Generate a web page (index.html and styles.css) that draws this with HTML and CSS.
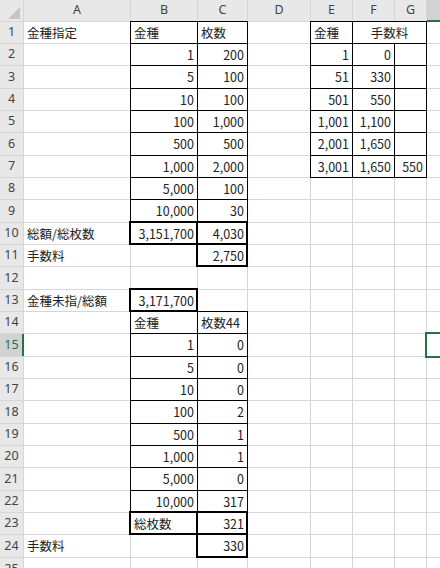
FILE: index.html
```html
<!DOCTYPE html>
<html lang="ja">
<head>
<meta charset="utf-8">
<title>Sheet</title>
<link rel="stylesheet" href="styles.css">
</head>
<body>
<div class="sheet">
  <div class="corner"></div><div class="hd">A</div><div class="hd">B</div><div class="hd">C</div><div class="hd">D</div><div class="hd">E</div><div class="hd">F</div><div class="hd">G</div><div class="hd hd-sel"></div>

  <div class="rh">1</div><div class="c">金種指定</div><div class="c b">金種</div><div class="c b">枚数</div><div class="c"></div><div class="c b">金種</div><div class="c b ctr span2">手数料</div><div class="c"></div>

  <div class="rh">2</div><div class="c"></div><div class="c b n">1</div><div class="c b n">200</div><div class="c"></div><div class="c b n">1</div><div class="c b n">0</div><div class="c b"></div><div class="c"></div>

  <div class="rh">3</div><div class="c"></div><div class="c b n">5</div><div class="c b n">100</div><div class="c"></div><div class="c b n">51</div><div class="c b n">330</div><div class="c b"></div><div class="c"></div>

  <div class="rh">4</div><div class="c"></div><div class="c b n">10</div><div class="c b n">100</div><div class="c"></div><div class="c b n">501</div><div class="c b n">550</div><div class="c b"></div><div class="c"></div>

  <div class="rh">5</div><div class="c"></div><div class="c b n">100</div><div class="c b n">1,000</div><div class="c"></div><div class="c b n">1,001</div><div class="c b n">1,100</div><div class="c b"></div><div class="c"></div>

  <div class="rh">6</div><div class="c"></div><div class="c b n">500</div><div class="c b n">500</div><div class="c"></div><div class="c b n">2,001</div><div class="c b n">1,650</div><div class="c b"></div><div class="c"></div>

  <div class="rh">7</div><div class="c"></div><div class="c b n">1,000</div><div class="c b n">2,000</div><div class="c"></div><div class="c b n">3,001</div><div class="c b n">1,650</div><div class="c b n">550</div><div class="c"></div>

  <div class="rh">8</div><div class="c"></div><div class="c b n">5,000</div><div class="c b n">100</div><div class="c"></div><div class="c"></div><div class="c"></div><div class="c"></div><div class="c"></div>

  <div class="rh">9</div><div class="c"></div><div class="c b n">10,000</div><div class="c b n">30</div><div class="c"></div><div class="c"></div><div class="c"></div><div class="c"></div><div class="c"></div>

  <div class="rh">10</div><div class="c">総額/総枚数</div><div class="c k n">3,151,700</div><div class="c k n">4,030</div><div class="c"></div><div class="c"></div><div class="c"></div><div class="c"></div><div class="c"></div>

  <div class="rh">11</div><div class="c">手数料</div><div class="c"></div><div class="c k n">2,750</div><div class="c"></div><div class="c"></div><div class="c"></div><div class="c"></div><div class="c"></div>

  <div class="rh">12</div><div class="c"></div><div class="c"></div><div class="c"></div><div class="c"></div><div class="c"></div><div class="c"></div><div class="c"></div><div class="c"></div>

  <div class="rh">13</div><div class="c">金種未指/総額</div><div class="c k n">3,171,700</div><div class="c"></div><div class="c"></div><div class="c"></div><div class="c"></div><div class="c"></div><div class="c"></div>

  <div class="rh">14</div><div class="c"></div><div class="c b">金種</div><div class="c b">枚数44</div><div class="c"></div><div class="c"></div><div class="c"></div><div class="c"></div><div class="c"></div>

  <div class="rh rh-sel">15</div><div class="c"></div><div class="c b n">1</div><div class="c b n">0</div><div class="c"></div><div class="c"></div><div class="c"></div><div class="c"></div><div class="c sel"></div>

  <div class="rh">16</div><div class="c"></div><div class="c b n">5</div><div class="c b n">0</div><div class="c"></div><div class="c"></div><div class="c"></div><div class="c"></div><div class="c"></div>

  <div class="rh">17</div><div class="c"></div><div class="c b n">10</div><div class="c b n">0</div><div class="c"></div><div class="c"></div><div class="c"></div><div class="c"></div><div class="c"></div>

  <div class="rh">18</div><div class="c"></div><div class="c b n">100</div><div class="c b n">2</div><div class="c"></div><div class="c"></div><div class="c"></div><div class="c"></div><div class="c"></div>

  <div class="rh">19</div><div class="c"></div><div class="c b n">500</div><div class="c b n">1</div><div class="c"></div><div class="c"></div><div class="c"></div><div class="c"></div><div class="c"></div>

  <div class="rh">20</div><div class="c"></div><div class="c b n">1,000</div><div class="c b n">1</div><div class="c"></div><div class="c"></div><div class="c"></div><div class="c"></div><div class="c"></div>

  <div class="rh">21</div><div class="c"></div><div class="c b n">5,000</div><div class="c b n">0</div><div class="c"></div><div class="c"></div><div class="c"></div><div class="c"></div><div class="c"></div>

  <div class="rh">22</div><div class="c"></div><div class="c b n">10,000</div><div class="c b n">317</div><div class="c"></div><div class="c"></div><div class="c"></div><div class="c"></div><div class="c"></div>

  <div class="rh">23</div><div class="c"></div><div class="c k">総枚数</div><div class="c k n">321</div><div class="c"></div><div class="c"></div><div class="c"></div><div class="c"></div><div class="c"></div>

  <div class="rh">24</div><div class="c">手数料</div><div class="c"></div><div class="c k n">330</div><div class="c"></div><div class="c"></div><div class="c"></div><div class="c"></div><div class="c"></div>

  <div class="rh">25</div><div class="c"></div><div class="c"></div><div class="c"></div><div class="c"></div><div class="c"></div><div class="c"></div><div class="c"></div><div class="c"></div>
</div>
</body>
</html>
```

FILE: styles.css
```css
html, body {
  margin: 0;
  padding: 0;
  background: #fff;
  height: 568px;
  overflow: hidden;
}

.sheet {
  display: grid;
  width: 440px;
  grid-template-columns: 23px 106px 66px 49px 62px 41px 41px 31px 1fr;
  grid-template-rows: 21px repeat(8, 21px 21px 22px) 22px;
  gap: 1px;
  background: #d6d6d6;
}

.corner {
  background: #e8e8e8;
  position: relative;
}

.corner::after {
  content: "";
  position: absolute;
  right: 3px;
  bottom: 2px;
  width: 12px;
  height: 12px;
  background: #c6c6c6;
  clip-path: polygon(100% 0, 100% 100%, 0 100%);
}

.hd,
.rh {
  background: #e8e8e8;
  color: #444;
  font: 12.5px "Noto Sans", "DejaVu Sans", sans-serif;
  line-height: 1;
  display: flex;
  align-items: center;
  justify-content: center;
  position: relative;
}

.hd-sel {
  background: #d2d2d2;
}

.hd-sel::after {
  content: "";
  position: absolute;
  left: 0;
  right: 0;
  bottom: -1px;
  height: 2px;
  background: #217346;
}

.rh-sel {
  background: #d2d2d2;
  color: #217346;
}

.rh-sel::after {
  content: "";
  position: absolute;
  top: 0;
  bottom: 0;
  right: -1px;
  width: 2px;
  background: #217346;
}

.c {
  background: #fff;
  position: relative;
  display: flex;
  align-items: center;
  padding: 1px 3px 0 3px;
  font: 12.5px "Noto Sans CJK JP", "Noto Sans", sans-serif;
  line-height: 1;
  color: #222;
  white-space: nowrap;
  min-width: 0;
}

.n {
  justify-content: flex-end;
}

.ctr {
  justify-content: center;
}

.span2 {
  grid-column: span 2;
}

.b::after {
  content: "";
  position: absolute;
  inset: -1px;
  border: 1px solid #000;
  z-index: 1;
  pointer-events: none;
}

.k::after {
  content: "";
  position: absolute;
  inset: -2px -1px -1px -2px;
  border: 2px solid #000;
  z-index: 2;
  pointer-events: none;
}

.sel::after {
  content: "";
  position: absolute;
  inset: -2px -2px -2px -2px;
  border: 2px solid #217346;
  z-index: 3;
  pointer-events: none;
}
```
